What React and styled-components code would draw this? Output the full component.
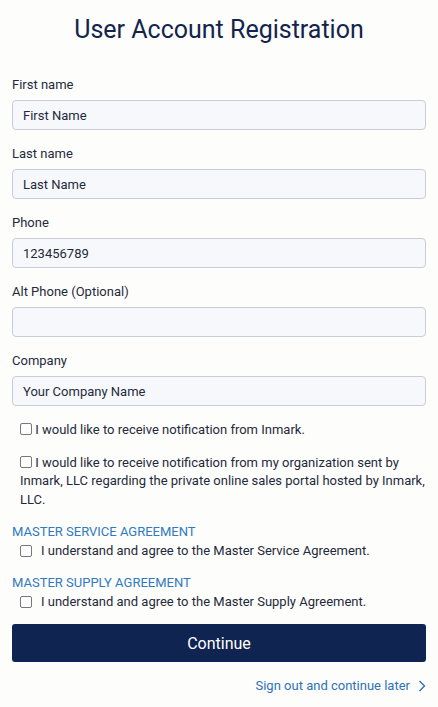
import React from "react";
import styled, { createGlobalStyle } from "styled-components";

const Global = createGlobalStyle`
  html, body { margin: 0; padding: 0; background: #fdfdfb; }
  body { font-family: Roboto, "Noto Sans", sans-serif; color: #1f2a3c; }
  * { box-sizing: border-box; }
`;

const Page = styled.div`
  padding: 14px 12px 12px;
  display: flex;
  flex-direction: column;
`;

const Title = styled.h1`
  margin: 0 0 30px;
  font-size: 25px;
  line-height: 32px;
  font-weight: 400;
  text-align: center;
  color: #13244c;
`;

const Field = styled.div`
  display: flex;
  flex-direction: column;
  margin-bottom: 15px;
`;

const Label = styled.label`
  font-size: 13px;
  line-height: 18px;
  margin-bottom: 6px;
  color: #1f2a3c;
`;

const Input = styled.input`
  height: 30px;
  width: 100%;
  padding: 0 10px;
  border: 1px solid #c9cdd7;
  border-radius: 4px;
  background: #f7f8fb;
  font: inherit;
  font-size: 13px;
  color: #1f2a3c;
  outline: none;
  &::placeholder { color: #1f2a3c; opacity: 1; }
`;

const Box = styled.input.attrs({ type: "checkbox" })`
  appearance: none;
  width: 12px;
  height: 12px;
  margin: 0;
  border: 1px solid #77787c;
  border-radius: 2px;
  background: #fff;
  flex: none;
  vertical-align: -1px;
`;

const Consent = styled.p`
  margin: ${(p) => p.$top}px 0 0;
  padding: 0 0 0 8px;
  font-size: 13px;
  line-height: 18.5px;
  color: #1f2a3c;
`;

const Section = styled.div`
  display: flex;
  flex-direction: column;
  margin-top: ${(p) => p.$top}px;
`;

const SectionHead = styled.div`
  font-size: 13px;
  line-height: 18px;
  color: #2f7ac0;
  text-transform: uppercase;
`;

const AgreeRow = styled.label`
  display: flex;
  align-items: center;
  gap: 9px;
  padding-left: 8px;
  margin-top: 1px;
  font-size: 13px;
  line-height: 18px;
  color: #1f2a3c;
`;

const Button = styled.button`
  margin-top: 13px;
  height: 38px;
  width: 100%;
  border: none;
  border-radius: 3px;
  background: #0f2451;
  color: #fff;
  font: inherit;
  font-size: 16px;
`;

const LinkRow = styled.div`
  display: flex;
  justify-content: flex-end;
  margin-top: 15px;
`;

const Link = styled.a`
  display: flex;
  align-items: center;
  gap: 8px;
  font-size: 13px;
  line-height: 18px;
  color: #2d72b8;
  text-decoration: none;
`;

const Chevron = () => (
  <svg width="8" height="12" viewBox="0 0 8 12" fill="none">
    <path d="M1.5 1l5 5-5 5" stroke="#2d72b8" strokeWidth="1.4" />
  </svg>
);

const fields = [
  { label: "First name", value: "First Name" },
  { label: "Last name", value: "Last Name" },
  { label: "Phone", value: "123456789" },
  { label: "Alt Phone (Optional)", value: "" },
  { label: "Company", value: "Your Company Name" },
];

export default function App() {
  return (
    <>
      <Global />
      <Page>
        <Title>User Account Registration</Title>
        {fields.map((f) => (
          <Field key={f.label}>
            <Label>{f.label}</Label>
            <Input placeholder={f.value} />
          </Field>
        ))}
        <Consent $top={0}>
          <Box /> I would like to receive notification from Inmark.
        </Consent>
        <Consent $top={14}>
          <Box /> I would like to receive notification from my organization sent by Inmark, LLC regarding the private online sales portal hosted by Inmark, LLC.
        </Consent>
        <Section $top={14}>
          <SectionHead>Master Service Agreement</SectionHead>
          <AgreeRow>
            <Box /> I understand and agree to the Master Service Agreement.
          </AgreeRow>
        </Section>
        <Section $top={14}>
          <SectionHead>Master Supply Agreement</SectionHead>
          <AgreeRow>
            <Box /> I understand and agree to the Master Supply Agreement.
          </AgreeRow>
        </Section>
        <Button>Continue</Button>
        <LinkRow>
          <Link href="#">
            Sign out and continue later <Chevron />
          </Link>
        </LinkRow>
      </Page>
    </>
  );
}
